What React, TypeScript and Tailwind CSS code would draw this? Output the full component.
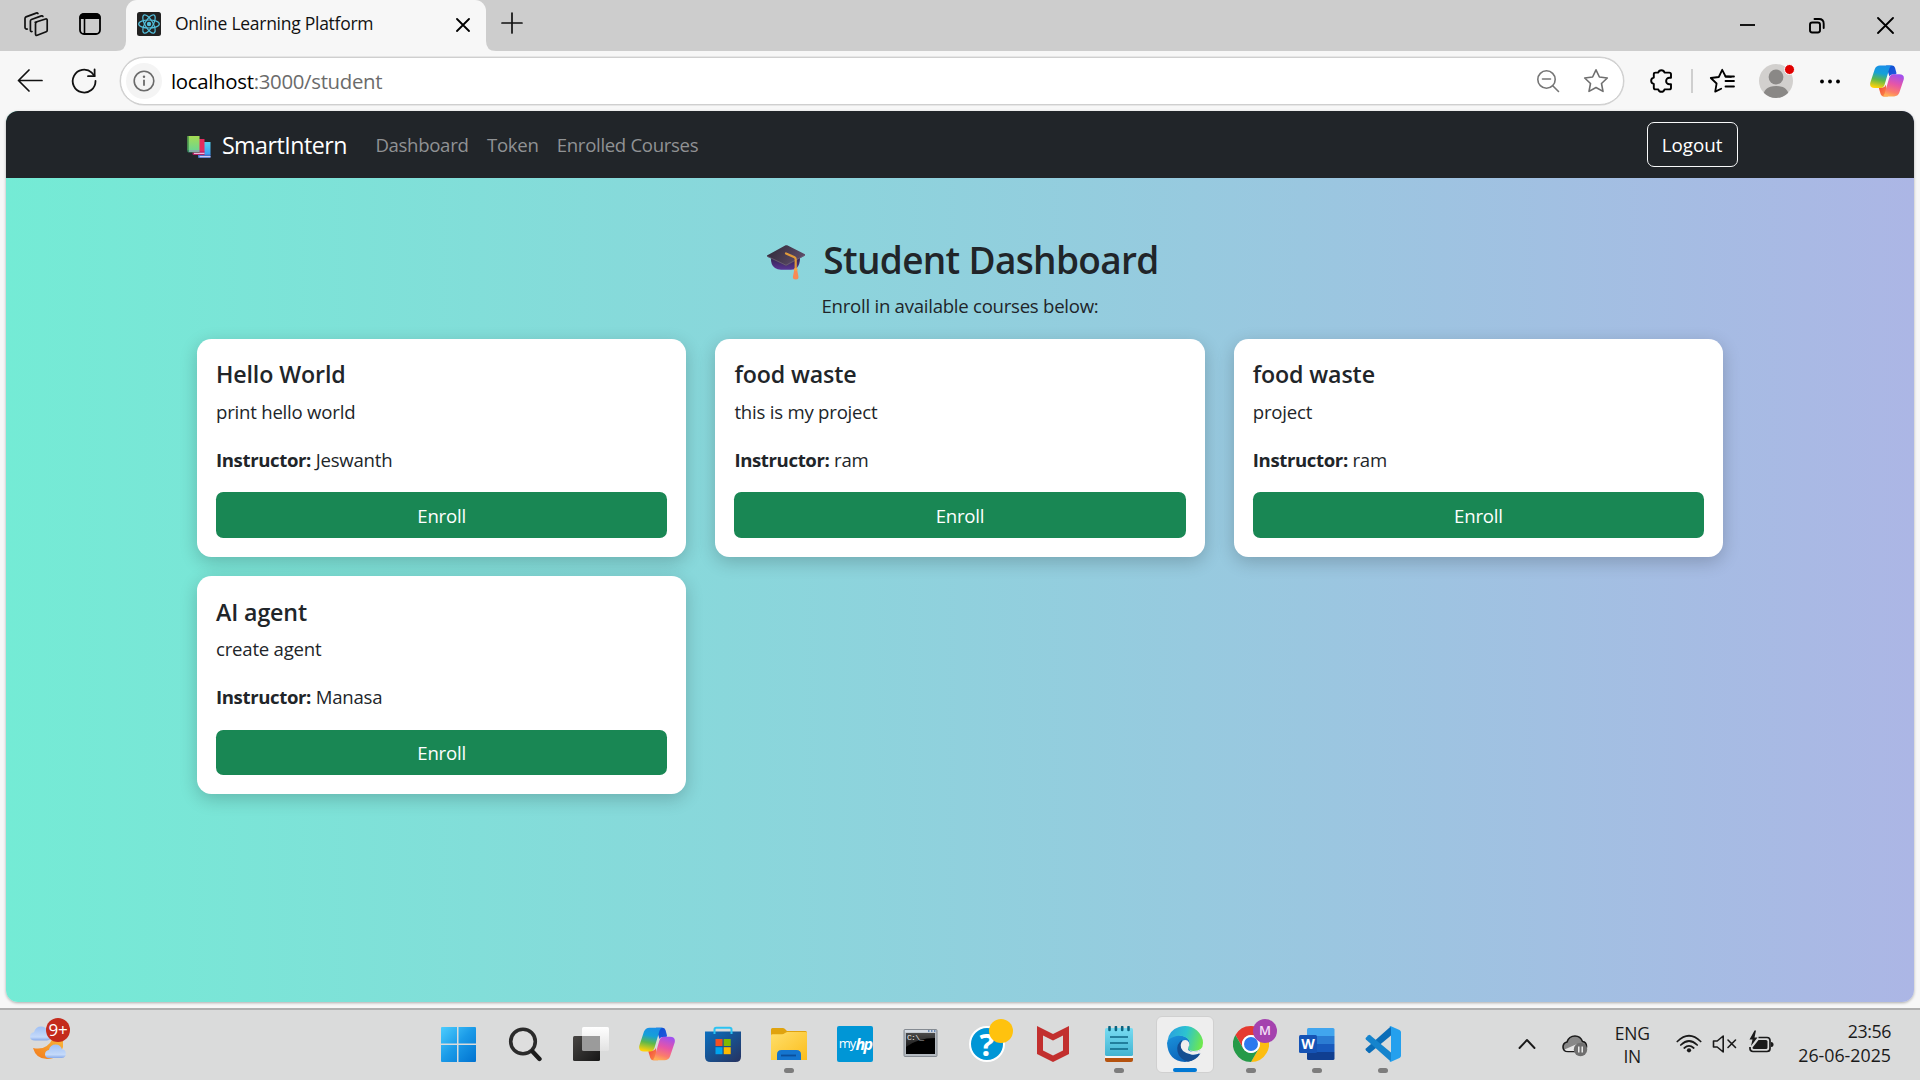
import type { ReactNode } from "react";

const courses = [
  { title: "Hello World", description: "print hello world", instructor: "Jeswanth" },
  { title: "food waste", description: "this is my project", instructor: "ram" },
  { title: "food waste", description: "project", instructor: "ram" },
  { title: "AI agent", description: "create agent", instructor: "Manasa" },
];

/* ---------- browser chrome icons ---------- */

function WorkspacesIcon() {
  return (
    <svg width="26" height="26" viewBox="0 0 26 26" fill="none" stroke="#111" strokeWidth="1.7" strokeLinejoin="round" strokeLinecap="round">
      <path d="M12.2 11.3 22.6 8q1.6-.4 1.6 1.2v10q0 1.100-1 1.500l-9 3.600q-1.700.5-1.700-1.200V13q0-1.200 1-1.700Z" />
      <path d="M9 20.500q-1.600.3-1.600-1.300V10q0-1.100 1-1.500l10-3.600q1.200-.3 1.500.6" />
      <path d="M4.300 18q-2.300.3-2.300-1.800V7.500Q2 6.300 3 5.900l10.200-3.800q1.200-.4 1.700.4" />
    </svg>
  );
}

function TabActionsIcon() {
  return (
    <svg width="24" height="24" viewBox="0 0 24 24">
      <rect x="2" y="2" width="20" height="20" rx="4" fill="none" stroke="#000" strokeWidth="1.8" />
      <path d="M1.500 7V5q0-3.500 3.500-3.500h14q3.500 0 3.500 3.500v2z" />
      <path d="M6.500 7v15" stroke="#000" strokeWidth="1.600" />
    </svg>
  );
}

function ReactFavicon() {
  return (
    <svg width="24" height="24" viewBox="0 0 24 24">
      <rect width="24" height="24" rx="2.500" fill="#222" />
      <g fill="none" stroke="#53c1de" strokeWidth="1.200">
        <ellipse cx="12" cy="12" rx="10.300" ry="4" />
        <ellipse cx="12" cy="12" rx="10.300" ry="4" transform="rotate(60 12 12)" />
        <ellipse cx="12" cy="12" rx="10.300" ry="4" transform="rotate(120 12 12)" />
      </g>
      <circle cx="12" cy="12" r="2.200" fill="#53c1de" />
    </svg>
  );
}

function CrossIcon({ size, weight }: { size: number; weight: number }) {
  return (
    <svg width={size} height={size} viewBox={`0 0 ${size} ${size}`} stroke="#000" strokeWidth={weight} strokeLinecap="round">
      <path d={`M1 1 ${size - 1} ${size - 1}M${size - 1} 1 1 ${size - 1}`} />
    </svg>
  );
}

function CopilotIcon({ size }: { size: number }) {
  return (
    <svg width={size} height={size} viewBox="0 0 36 36">
      <defs>
        <linearGradient id="cpLeft" x1="0.6" y1="0" x2="0.4" y2="1">
          <stop offset="0" stopColor="#1a8fe8" />
          <stop offset=".35" stopColor="#15a0d8" />
          <stop offset=".65" stopColor="#5fb84a" />
          <stop offset="1" stopColor="#ffd20a" />
        </linearGradient>
        <linearGradient id="cpRight" x1="0.700" y1="0" x2="0.400" y2="1">
          <stop offset="0" stopColor="#a050f0" />
          <stop offset=".45" stopColor="#e655a8" />
          <stop offset=".8" stopColor="#fb7d6b" />
          <stop offset="1" stopColor="#ffae55" />
        </linearGradient>
        <linearGradient id="cpTop" x1="0" y1="0" x2="1" y2="1">
          <stop offset="0" stopColor="#0a4fd0" />
          <stop offset="1" stopColor="#2358e0" />
        </linearGradient>
        <linearGradient id="cpBottom" x1="0" y1="0" x2="1" y2="1">
          <stop offset="0" stopColor="#f0453c" />
          <stop offset="1" stopColor="#ff9348" />
        </linearGradient>
      </defs>
      <path d="M17 1.700h6.500q2.200 0 3 2.200L28 9.500q.3 1.500-1.500 1.500h-3q-2 0-3 2z" fill="url(#cpTop)" />
      <path d="M19 34.300h-4.500q-2.500 0-3.200-2.200L9.500 26q-.3-1.200 1-1.200h3.200q2 0 3-2.800z" fill="url(#cpBottom)" />
      <path d="M10.500 1.700h13q-2 0-3 3l-5 17q-1 3.700-4.500 3.700H5Q-.8 25.400.3 19.800L5 5.500q1.500-3.800 5.500-3.800Z" fill="url(#cpLeft)" />
      <path d="M25.500 34.300h-13q2.200 0 3-3l4.800-16.500q1.200-4 4.700-4h6q5.800 0 4.700 5.600L31 30.500q-1.500 3.800-5.500 3.800Z" fill="url(#cpRight)" />
    </svg>
  );
}

/* ---------- browser chrome ---------- */

function TabStrip() {
  return (
    <div className="flex h-[51px] bg-[#cdcdcd] pl-[23px]">
      <div className="flex items-start pt-[11px]">
        <WorkspacesIcon />
      </div>
      <div className="ml-[29px] flex items-start pt-[12px]">
        <TabActionsIcon />
      </div>
      <div className="flex w-[24px] items-end justify-end">
        <svg width="10" height="10" viewBox="0 0 10 10">
          <path d="M10 0v10H0Q10 10 10 0Z" fill="#f7f7f7" />
        </svg>
      </div>
      <div className="flex w-[360px] items-start rounded-t-[11px] bg-[#f7f7f7] pl-[11px] pt-[12px]">
        <ReactFavicon />
        <span className="ml-[14px] w-[281px] whitespace-nowrap text-[17.5px] leading-[23px] tracking-[-0.270px] text-[#111]">
          Online Learning Platform
        </span>
        <div className="pt-[6px]">
          <CrossIcon size={14} weight={1.8} />
        </div>
      </div>
      <div className="flex w-[10px] items-end">
        <svg width="10" height="10" viewBox="0 0 10 10">
          <path d="M0 0v10h10Q0 10 0 0Z" fill="#f7f7f7" />
        </svg>
      </div>
      <div className="ml-[5px] pt-[12px]">
        <svg width="22" height="22" viewBox="0 0 22 22" stroke="#111" strokeWidth="1.700" strokeLinecap="round">
          <path d="M11 1v20M1 11h20" />
        </svg>
      </div>
      <div className="ml-auto flex items-start gap-[52px] pr-[26px] pt-[17px]">
        <svg width="17" height="17" viewBox="0 0 17 17" stroke="#000" strokeWidth="1.800">
          <path d="M1 8h15" />
        </svg>
        <svg width="17" height="17" viewBox="0 0 17 17" fill="none" stroke="#000" strokeWidth="1.900" strokeLinecap="round">
          <rect x="2" y="5.500" width="10" height="10" rx="2.200" />
          <path d="M6.500 2H11q4.700 0 4.700 4.700V11" />
        </svg>
        <CrossIcon size={17} weight={1.8} />
      </div>
    </div>
  );
}

function Toolbar() {
  return (
    <div className="flex h-[60px] items-center bg-[#f7f7f7] pl-[17px]">
      <svg width="26" height="24" viewBox="0 0 26 24" fill="none" stroke="#111" strokeWidth="1.700" strokeLinecap="round" strokeLinejoin="round">
        <path d="M25 11.500H1.500M12 1 1.500 11.500 12 22" />
      </svg>
      <svg className="ml-[28px]" width="26" height="26" viewBox="0 0 26 26" fill="none" stroke="#111" strokeWidth="1.800" strokeLinecap="round" strokeLinejoin="round">
        <path d="M24.500 12.800A11.400 11.400 0 1 1 20.800 4.700L23.500 8" />
        <path d="M23.600 1.500V8.200H17" />
      </svg>
      <div className="ml-[23px] flex h-[48px] w-[1504px] items-center rounded-full border border-[#cfcfcf] bg-white pl-[5px] shadow-[0_0_0_0.5px_#d6d6d6]">
        <div className="flex size-[36px] items-center justify-center rounded-full bg-[#f4f4f4]">
          <svg width="22" height="22" viewBox="0 0 22 22" fill="none" stroke="#6a6a6a" strokeWidth="1.600">
            <circle cx="11" cy="11" r="9.800" />
            <path d="M11 9.800v6" strokeWidth="1.800" />
            <circle cx="11" cy="6.800" r="1.200" fill="#6a6a6a" stroke="none" />
          </svg>
        </div>
        <span className="ml-[9px] text-[20.400px] tracking-[-0.310px] text-[#6b6b6b]">
          <span className="text-black">localhost</span>:3000/student
        </span>
        <svg className="ml-auto" width="24" height="24" viewBox="0 0 24 24" fill="none" stroke="#767676" strokeWidth="1.600" strokeLinecap="round">
          <circle cx="10.500" cy="10.500" r="8.700" />
          <path d="m17 17 5.500 5.500M6.500 10h8" />
        </svg>
        <svg className="ml-[23px] mr-[14px]" width="26" height="26" viewBox="0 0 26 26" fill="none" stroke="#6f6f6f" strokeWidth="1.600" strokeLinejoin="round">
          <path d="m13 1.800 3.400 7.200 7.900 1-5.800 5.500 1.500 7.900-7-3.900-7 3.900 1.500-7.900L1.700 10l7.900-1z" />
        </svg>
      </div>
      <svg className="ml-[25px]" width="26" height="26" viewBox="0 0 26 26" fill="none" stroke="#000" strokeWidth="1.900" strokeLinejoin="round">
        <path d="M9.300 4.600a3.200 3.200 0 0 1 6.200 0h4.800q1.700 0 1.700 1.700v3.400h-1.600a3.300 3.300 0 0 0 0 6.600H22v3.400q0 1.700-1.700 1.700h-4.800a3.200 3.200 0 0 1-6.200 0H6.500q-1.700 0-1.700-1.700v-3.800a3.200 3.200 0 0 1 0-6.300V6.300q0-1.700 1.700-1.700z" />
      </svg>
      <div className="ml-[16px] h-[24px] w-[2px] bg-[#cfcfcf]" />
      <svg className="ml-[16px]" width="26" height="26" viewBox="0 0 26 26" fill="none" stroke="#000" strokeWidth="1.800" strokeLinejoin="round" strokeLinecap="round">
        <path d="M22 8.800 16.600 8.500 13.200 1.800 9.800 9l-8 1 5.800 5.500L6.200 23.600l6-2.900" />
        <path d="M16.500 13H25M16.500 8.500H25M16.500 18.500H25" />
      </svg>
      <div className="relative ml-[24px] size-[34px] shrink-0">
        <svg width="34" height="34" viewBox="0 0 34 34">
          <clipPath id="avatarClip">
            <circle cx="17" cy="17" r="17" />
          </clipPath>
          <g clipPath="url(#avatarClip)">
            <rect width="34" height="34" fill="#d2d0ce" />
            <circle cx="17" cy="13" r="7.400" fill="#8a8886" />
            <path d="M4 34q0-12 13-12t13 12z" fill="#8a8886" />
          </g>
        </svg>
        <span className="absolute top-0 right-[-2px] size-[11px] rounded-full border border-white bg-[#e00000]" />
      </div>
      <svg className="ml-[25px]" width="24" height="8" viewBox="0 0 24 8">
        <circle cx="4" cy="4.500" r="1.900" />
        <circle cx="12" cy="4.500" r="1.900" />
        <circle cx="20" cy="4.500" r="1.900" />
      </svg>
      <div className="ml-[28px]">
        <CopilotIcon size={34} />
      </div>
    </div>
  );
}

/* ---------- web page ---------- */

function BooksIcon() {
  return (
    <svg width="24" height="24" viewBox="0 0 24 24">
      <defs>
        <linearGradient id="bkGreen" x1="0" y1="0" x2="0" y2="1">
          <stop offset="0" stopColor="#a5dc52" />
          <stop offset="1" stopColor="#6fd68e" />
        </linearGradient>
        <linearGradient id="bkBlue" x1="0" y1="0" x2="0" y2="1">
          <stop offset="0" stopColor="#52d0ee" />
          <stop offset="1" stopColor="#3a9df5" />
        </linearGradient>
      </defs>
      <path d="M11.500 7h12v13h-12z" fill="url(#bkBlue)" />
      <path d="M11 19.500h12.500V23H12q-1 0-1-1z" fill="#4573c9" />
      <path d="M12.500 21h11v1.300h-11z" fill="#cfc7f2" />
      <path d="M6 4h11.500v13H6z" fill="#e32b5e" />
      <path d="M5.500 16.500h12V20H7q-1.500 0-1.500-1z" fill="#b51f63" />
      <path d="M7 17.800h10.500V19H7z" fill="#eab7df" />
      <path d="M.500 1.500Q.500 1 1 1H12.500v14H.500z" fill="url(#bkGreen)" />
      <path d="M.500 1.500V16h1.200V1z" fill="#3f8f49" />
      <path d="M.500 15h12v2.500H2q-1.500 0-1.500-1.200z" fill="#3b8a63" />
      <path d="M2 15.500h10.500v1.100H2z" fill="#d6cdf0" />
    </svg>
  );
}

function GraduationCap() {
  return (
    <svg width="40" height="38" viewBox="0 0 40 38">
      <defs>
        <linearGradient id="capTop" x1="0" y1="0" x2="1" y2="0.400">
          <stop offset="0" stopColor="#2e2836" />
          <stop offset="1" stopColor="#5b4a66" />
        </linearGradient>
        <linearGradient id="capBase" x1="0" y1="0" x2="0" y2="1">
          <stop offset="0" stopColor="#33254f" />
          <stop offset="1" stopColor="#5a3494" />
        </linearGradient>
      </defs>
      <path d="M5 13q-.5 7 4 10 2.500 1.800 6 1.800h10q4 0 6-2 3-3.500 3-9.800z" fill="url(#capBase)" />
      <path d="M1 11.600v-1L19.600.300q.8-.3 1.600 0L39 9.300v1.200L21 20.500q-.8.400-1.600 0z" fill="url(#capTop)" />
      <path d="M1 11.200 20 20.200 39 10" fill="none" stroke="#6d5f78" strokeWidth=".8" />
      <path d="M20 8.500 28.500 12.200q1.200.6 1.200 2V25" fill="none" stroke="#e09a3a" strokeWidth="2.200" strokeLinecap="round" />
      <path d="M28.400 24h2.600l1.500 8q0 2.500-2.800 2.500t-2.800-2.500z" fill="#fa8a55" />
      <circle cx="29.700" cy="24.500" r="1.800" fill="#f6a04a" />
    </svg>
  );
}

function Navbar() {
  return (
    <nav className="flex h-[67px] items-center bg-[#212529] px-[176.400px]">
      <div className="ml-[5px] mt-[4px]">
        <BooksIcon />
      </div>
      <span className="ml-[10.500px] w-[143.500px] whitespace-nowrap pt-[1px] text-[23.200px] tracking-[-0.500px] text-white">SmartIntern</span>
      <div className="flex gap-[19.200px] whitespace-nowrap pl-[10px] pt-px text-[18.600px] tracking-[-0.320px] text-[#909294]">
        <span className="w-[92.500px]">Dashboard</span>
        <span className="w-[50.500px]">Token</span>
        <span>Enrolled Courses</span>
      </div>
      <button className="ml-auto flex h-[45px] w-[91px] items-center justify-center rounded-[7px] border border-[#f8f9fa] pt-[2px] text-[18.800px] text-white">
        Logout
      </button>
    </nav>
  );
}

function CourseCard({ title, description, instructor }: { title: string; description: string; instructor: string }) {
  return (
    <div className="rounded-[14.400px] bg-white p-[19.200px] text-[18.600px] leading-[28.800px] tracking-[-0.220px] shadow-[0_5px_18px_rgba(0,0,0,0.2)]">
      <h5 className="mb-[8.600px] pt-[3px] text-[23.200px] font-semibold leading-[27.800px] tracking-[-0.120px]">{title}</h5>
      <p className="mb-[19.200px]">{description}</p>
      <p className="mb-[18px]">
        <strong className="font-bold tracking-[-0.380px]">Instructor:</strong> {instructor}
      </p>
      <button className="flex h-[45.600px] w-full items-center justify-center rounded-[7.200px] bg-[#198754] pt-[2px] text-white">Enroll</button>
    </div>
  );
}

function WebPage() {
  return (
    <div className="mx-[6px] h-[891px] overflow-hidden rounded-[12px] bg-[linear-gradient(to_right,#74ebd5,#acb6e5)] text-[#212529] shadow-[0_1px_3px_rgba(0,0,0,0.3)]">
      <Navbar />
      <main className="px-[190.800px] pt-[59px]">
        <h2 className="flex h-[46px] items-center justify-center pl-[5px] text-[37px] font-semibold leading-[46px] tracking-[-0.670px]">
          <span className="mr-[17px] pt-[8px]">
            <GraduationCap />
          </span>
          <span>Student Dashboard</span>
        </h2>
        <p className="mt-[9px] text-center text-[18.600px] leading-[28.800px] tracking-[-0.260px]">Enroll in available courses below:</p>
        <div className="mt-[18.200px] grid grid-cols-3 gap-x-[28.800px] gap-y-[19.200px]">
          {courses.map((c, i) => (
            <CourseCard key={i} {...c} />
          ))}
        </div>
      </main>
    </div>
  );
}

/* ---------- taskbar ---------- */

const CLOUD = "M5 14.500Q0 14.500 0 10.500 0 7 4 6.200 5.500.5 11 .5q5 0 6.500 5 4 .500 4 4.500t-4.500 4.500z";

function WeatherWidget() {
  return (
    <div className="relative ml-[28px] mt-[14px] h-[44px] w-[44px]">
      <svg width="44" height="44" viewBox="0 0 44 44">
        <defs>
          <linearGradient id="moon" x1="0" y1="1" x2="1" y2="0">
            <stop offset="0" stopColor="#f2791d" />
            <stop offset="1" stopColor="#f9b83a" />
          </linearGradient>
          <linearGradient id="cloud" x1="0" y1="0" x2="0" y2="1">
            <stop offset="0" stopColor="#9fc0f5" />
            <stop offset=".75" stopColor="#c5dafa" />
            <stop offset="1" stopColor="#86a9ea" />
          </linearGradient>
        </defs>
        <path d="M5 24q14 3 20-10l10 2v7q-4 12-16 12Q8 35 5 24Z" fill="url(#moon)" />
        <path d={CLOUD} transform="translate(2 2)" fill="url(#cloud)" />
        <path d={CLOUD} transform="translate(17 20) scale(.97)" fill="url(#cloud)" />
      </svg>
      <span className="absolute left-[18px] top-[-6px] flex size-[24px] items-center justify-center rounded-full bg-[#c42b1c] text-[17px] tracking-[-0.200px] text-white">
        9+
      </span>
    </div>
  );
}

const StartIcon = () => (
  <svg className="mr-[3px]" width="36" height="36" viewBox="0 0 36 36">
    <defs>
      <linearGradient id="win" gradientUnits="userSpaceOnUse" x1="0" y1="0" x2="36" y2="36">
        <stop offset="0" stopColor="#4fd0ff" />
        <stop offset=".5" stopColor="#1b9be8" />
        <stop offset="1" stopColor="#0072d0" />
      </linearGradient>
    </defs>
    <path d="M2 1h15v16.500H1V2q0-1 1-1ZM18.500 1H35q1 0 1 1v15.500H18.500zM1 19h16v17H2q-1 0-1-1zM18.500 19H36v16q0 1-1 1H18.500z" fill="url(#win)" />
  </svg>
);

const SearchIcon = () => (
  <svg width="36" height="36" viewBox="0 0 36 36">
    <circle cx="16" cy="15.500" r="12.300" fill="#dedede" stroke="#2b2b2b" strokeWidth="3.600" />
    <path d="m25.500 25.500 7 7.500" stroke="#1c1c1c" strokeWidth="4.400" strokeLinecap="round" />
  </svg>
);

const TaskViewIcon = () => (
  <svg width="36" height="36" viewBox="0 0 36 36">
    <defs>
      <linearGradient id="tvBack" x1="0" y1="0" x2="1" y2="1">
        <stop offset="0" stopColor="#484644" />
        <stop offset="1" stopColor="#161616" />
      </linearGradient>
      <linearGradient id="tvFront" x1="0" y1="0" x2="0" y2="1">
        <stop offset="0" stopColor="#fff" />
        <stop offset="1" stopColor="#e2e2e2" />
      </linearGradient>
    </defs>
    <rect x="9" y="1" width="27" height="24" rx="1.500" fill="url(#tvFront)" />
    <rect x="0" y="10" width="27" height="25" rx="1.500" fill="url(#tvBack)" />
    <path d="M9 10h18v15H10.500Q9 25 9 23.500z" fill="#9b9b9b" />
  </svg>
);

const StoreIcon = () => (
  <svg width="36" height="36" viewBox="0 0 36 36">
    <defs>
      <linearGradient id="store" x1="0" y1="0" x2="1" y2="1">
        <stop offset="0" stopColor="#0a6fbf" />
        <stop offset="1" stopColor="#27325f" />
      </linearGradient>
    </defs>
    <path d="M0 5.500h36v25Q36 36 30.500 36h-25Q0 36 0 30.500z" fill="url(#store)" />
    <path d="M9.500 8V3.500q0-1.700 1.700-1.700h13.600q1.700 0 1.700 1.700V8" fill="none" stroke="#2cc3f2" strokeWidth="2" />
    <path d="M10.500 13h7v7h-7z" fill="#f25022" />
    <path d="M18.700 13h7v7h-7z" fill="#7fba00" />
    <path d="M10.500 21.200h7v7h-7z" fill="#00a4ef" />
    <path d="M18.700 21.200h7v7h-7z" fill="#ffb900" />
  </svg>
);

const ExplorerIcon = () => (
  <svg width="36" height="36" viewBox="0 0 36 36">
    <defs>
      <linearGradient id="folder" x1="0" y1="0" x2="1" y2="1">
        <stop offset="0" stopColor="#ffdf6b" />
        <stop offset="1" stopColor="#fbbd1c" />
      </linearGradient>
    </defs>
    <path d="M0 3.500Q0 2 1.500 2H12q1.500 0 2.500 1.500L16 5h18.500q1.500 0 1.500 1.500V12H0z" fill="#e0a30e" />
    <path d="M0 9.500q0-1.300 1.500-1.300H11q1.500 0 3-1.200L16 6h19q1 0 1 1v27H0z" fill="url(#folder)" />
    <path d="M6 34v-5.500Q6 24 10.500 24h15q4.500 0 4.500 4.500V34z" fill="#1475cf" />
    <path d="M10 29.500h15" stroke="#0a4f9c" strokeWidth="1.800" />
  </svg>
);

const MyHpIcon = () => (
  <div className="flex size-[36px] items-center justify-center rounded-[2px] bg-[#0096d6] text-white">
    <span className="text-[13px] tracking-[-0.800px]">my</span>
    <span className="-mt-px text-[16px] font-bold italic tracking-[-1.700px]">hp</span>
  </div>
);

const TerminalIcon = () => (
  <svg width="36" height="36" viewBox="0 0 36 36">
    <defs>
      <linearGradient id="term" x1="0" y1="0" x2="0" y2="1">
        <stop offset="0" stopColor="#4a4a4a" />
        <stop offset="1" stopColor="#1c1c1c" />
      </linearGradient>
    </defs>
    <rect x="1" y="3.500" width="33" height="27" rx="1" fill="#b4bac0" stroke="#858b92" />
    <path d="M2 4h31v2.500H2z" fill="#d5dbe3" />
    <path d="M25 5h1.500M28 5h1.500M31 5h1.500" stroke="#4b73a8" strokeWidth="1.300" />
    <rect x="3" y="7" width="29" height="21" fill="#000" />
    <path d="M3 7h29v5Q15 12 3 21z" fill="url(#term)" />
    <text x="4" y="14" fontSize="8" fill="#eee" fontFamily="Liberation Mono, monospace" textLength="17">C:\_</text>
  </svg>
);

const HelpIcon = () => (
  <div className="relative size-[36px]">
    <div className="flex size-[36px] items-center justify-center rounded-full border-[2px] border-white bg-[#0096d6] text-[31px] font-bold leading-none text-white">?</div>
    <span className="absolute left-[20px] top-[-7px] size-[24px] rounded-full bg-[#ffc20e]" />
  </div>
);

const McAfeeIcon = () => (
  <svg width="36" height="36" viewBox="0 0 36 36">
    <path d="M2 0 18 8 34 0v28L18 36 2 28z" fill="#c22f2e" />
    <path d="m8 9.500 10 5 10-5v15l-10 5-10-5z" fill="#dadada" />
  </svg>
);

const NotepadIcon = () => (
  <svg width="36" height="36" viewBox="0 0 36 36">
    <defs>
      <linearGradient id="note" x1="0" y1="0" x2="0" y2="1">
        <stop offset="0" stopColor="#78dcf2" />
        <stop offset="1" stopColor="#42b4d2" />
      </linearGradient>
    </defs>
    <path d="M4 31h28v3q0 2-2 2H6q-2 0-2-2z" fill="#b5530f" />
    <path d="M4 28h28v4H4z" fill="#f4f4f4" />
    <rect x="4" y="2" width="28" height="28" rx="1.500" fill="url(#note)" />
    <path d="M8.500 1v3M14.900 1v3M21.200 1v3M27.500 1v3" stroke="#0d6480" strokeWidth="2.600" strokeLinecap="round" />
    <path d="M9 11h18M9 17h18M9 23h18" stroke="#0f6786" strokeWidth="1.700" />
  </svg>
);

const EdgeIcon = () => (
  <svg width="36" height="36" viewBox="0 0 36 36">
    <defs>
      <linearGradient id="edTop" x1="0" y1=".3" x2="1" y2=".5">
        <stop offset="0" stopColor="#2a9fe0" />
        <stop offset=".5" stopColor="#2cc3d0" />
        <stop offset="1" stopColor="#6ee84e" />
      </linearGradient>
      <linearGradient id="edMid" x1="0" y1="0" x2=".5" y2="1">
        <stop offset="0" stopColor="#1b93dc" />
        <stop offset="1" stopColor="#0b62b8" />
      </linearGradient>
    </defs>
    <path d="M0 17Q2 8 12 9q14 2 10 12-1 4 4 5 4 0 8-2-5 12-16 12Q1 35 0 17Z" fill="url(#edMid)" />
    <path d="M.5 15Q2 4 12 1q10-3 18 3.500 6 5.500 6 12.500 0 8-9.500 8-6.500 0-5-4 2-3 .5-6.500Q18 9 9.500 10 3 11.500 .5 15Z" fill="url(#edTop)" />
    <path d="M15 14q-6 4-4.500 11.500Q12 33 21 35.700q8-1.200 12.500-8.200-2 .5-4.500 1-9 1-12.500-5.500-2.500-5-1.500-9Z" fill="#134d92" />
    <path d="M16 14.500q4-1.500 6 2 1 3-.8 5.500Q20 25.500 26.500 25.700q4 0 7-1.700 2.500-.8 1.500 1.500-5 4-10 3.200Q13 26.500 13.700 19q.3-3 2.300-4.500Z" fill="#eeeeee" />
  </svg>
);

const ChromeIcon = () => (
  <div className="relative size-[36px]">
    <svg width="36" height="36" viewBox="0 0 36 36">
      <path d="M2.410 9A18 18 0 0 1 33.590 9H18a9 9 0 0 0-7.790 13.500z" fill="#e53a30" />
      <path d="M33.590 9A18 18 0 0 1 18 36l7.790-13.500A9 9 0 0 0 18 9z" fill="#fcbd10" />
      <path d="M18 36A18 18 0 0 1 2.410 9l7.800 13.500A9 9 0 0 0 25.790 22.500z" fill="#259a48" />
      <circle cx="18" cy="18" r="9" fill="#fff" />
      <circle cx="18" cy="18" r="7" fill="#2b79ee" />
    </svg>
    <span className="absolute left-[20px] top-[-7px] flex size-[24px] items-center justify-center rounded-full bg-[#a442ae] text-[13px] font-semibold text-[#f3dff6]">M</span>
  </div>
);

const WordIcon = () => (
  <div className="relative size-[36px]">
    <svg width="36" height="36" viewBox="0 0 36 36">
      <path d="M8 3.500Q8 2 9.500 2H34q1.500 0 1.500 1.500V10H8z" fill="#41a5ee" />
      <path d="M8 10h27.500v8H8z" fill="#2b7cd3" />
      <path d="M8 18h27.500v8H8z" fill="#185abd" />
      <path d="M8 26h27.500v6.500q0 1.500-1.500 1.500H9.500Q8 34 8 32.500z" fill="#103f91" />
      <rect x="0" y="9" width="18" height="18" rx="1.500" fill="#1553b5" />
    </svg>
    <span className="absolute left-0 top-[9px] flex h-[18px] w-[18px] items-center justify-center text-[14px] font-bold leading-none text-white">W</span>
  </div>
);

const VsCodeIcon = () => (
  <svg width="36" height="36" viewBox="0 0 36 36">
    <path d="M26 .3v9.200L5.200 26.800q-.9.700-1.800 0L.9 24.300q-.9-1 0-1.900z" fill="#0a6db8" />
    <path d="M26 35.700v-9.200L5.200 9.200q-.9-.7-1.800 0L.9 11.700q-.9 1 0 1.900z" fill="#1584cd" />
    <path d="M26 .3 34.500 4Q36 4.700 36 6.200v23.600q0 1.500-1.500 2.200L26 35.700q-1 .2-2-.6 2 .5 2-1.700V2.600q0-2.200-2-1.700 1-.9 2-.6Z" fill="#24a0ee" />
  </svg>
);

type App = { icon: ReactNode; state?: "open" | "active" };

const apps: App[] = [
  { icon: <StartIcon /> },
  { icon: <SearchIcon /> },
  { icon: <TaskViewIcon /> },
  { icon: <CopilotIcon size={36} /> },
  { icon: <StoreIcon /> },
  { icon: <ExplorerIcon />, state: "open" },
  { icon: <MyHpIcon /> },
  { icon: <TerminalIcon /> },
  { icon: <HelpIcon /> },
  { icon: <McAfeeIcon /> },
  { icon: <NotepadIcon />, state: "open" },
  { icon: <EdgeIcon />, state: "active" },
  { icon: <ChromeIcon />, state: "open" },
  { icon: <WordIcon />, state: "open" },
  { icon: <VsCodeIcon />, state: "open" },
];

function AppButton({ icon, state }: App) {
  return (
    <div className="flex h-[58px] w-[66px] justify-center">
      <div
        className={
          state === "active"
            ? "flex h-[57px] w-[58px] flex-col items-center rounded-[6px] border border-[#d0d0d0] bg-[#eeeeee] pt-[9px]"
            : "flex w-[58px] flex-col items-center pt-[10px]"
        }
      >
        {icon}
        {state === "active" && <span className="mt-[6px] h-[5px] w-[24px] rounded-full bg-[#0078d4]" />}
        {state === "open" && <span className="mt-[6px] h-[5px] w-[10px] rounded-full bg-[#7d7d7d]" />}
      </div>
    </div>
  );
}

function SystemTray() {
  return (
    <div className="ml-auto flex items-start pr-[29px] text-[#1a1a1a]">
      <svg className="mt-[28px]" width="18" height="12" viewBox="0 0 18 12" fill="none" stroke="#1a1a1a" strokeWidth="1.900" strokeLinecap="round" strokeLinejoin="round">
        <path d="m1.500 10 7.500-8 7.500 8" />
      </svg>
      <svg className="ml-[26px] mt-[25px]" width="26" height="22" viewBox="0 0 26 22">
        <path d="M6 16.500Q1 16.500 1 12 1 8 5 7q2-6 8-6 5.500 0 7.500 5.500 4 .5 4 5.000 0 5-5 5z" fill="#888" stroke="#1a1a1a" strokeWidth="1.600" />
        <path d="M2.500 14.500 15 9l4 7H6q-2.500 0-3.500-1.500Z" fill="#e6e6e6" />
        <circle cx="18.500" cy="14.500" r="6.700" fill="#6f6f6f" />
        <path d="M16.800 11.500v6M20.200 11.500v6" stroke="#fff" strokeWidth="1.300" />
      </svg>
      <div className="ml-[22px] mt-[12px] w-[44px] text-center text-[17.500px] leading-[23px] tracking-[-0.200px]">
        <div>ENG</div>
        <div>IN</div>
      </div>
      <svg className="ml-[22px] mt-[24px]" width="26" height="20" viewBox="0 0 26 20" fill="none" stroke="#1a1a1a" strokeWidth="1.700" strokeLinecap="round">
        <path d="M1.300 7.500q11.700-11.500 23.400 0M4.800 11q8.200-8 16.400 0M8.300 14q4.700-4.300 9.400 0" />
        <circle cx="13" cy="16.300" r="2.100" fill="#1a1a1a" stroke="none" />
      </svg>
      <svg className="ml-[10px] mt-[24px]" width="26" height="20" viewBox="0 0 26 20" fill="none" stroke="#1a1a1a" strokeWidth="1.600" strokeLinecap="round" strokeLinejoin="round">
        <path d="M1.500 7h3.700l6-5v16l-6-5H1.500zM16 6l7.500 7.500M23.500 6 16 13.500" />
      </svg>
      <svg className="ml-[10px] mt-[20px]" width="26" height="24" viewBox="0 0 26 24">
        <path d="M10.500 7.500H19q3 0 3 3v8q0 3-3 3H5q-3 0-3-3V17" fill="none" stroke="#1a1a1a" strokeWidth="1.700" />
        <path d="M10.500 10H18q1.500 0 1.500 1.500v6Q19.500 19 18 19H6q-1.500 0-1.500-1.500z" fill="#1a1a1a" />
        <path d="M23 12q2.500 0 2.500 2.500T23 17z" fill="#1a1a1a" />
        <path d="M6.500.5 1.500 9.500h3l-1.500 6.500 6.500-8.500H6.500L8 .5z" fill="#1a1a1a" />
      </svg>
      <div className="ml-[24px] mt-[9px] text-right text-[17.800px] leading-[24px]">
        <div className="tracking-[-0.400px]">23:56</div>
        <div>26-06-2025</div>
      </div>
    </div>
  );
}

function Taskbar() {
  return (
    <div className="mt-[6px] flex h-[72px] border-t-[2px] border-[#b0b0b0] bg-[#dadbdb]">
      <div className="w-[426px] shrink-0">
        <WeatherWidget />
      </div>
      <div className="flex pt-[6px]">
        {apps.map((a, i) => (
          <AppButton key={i} {...a} />
        ))}
      </div>
      <SystemTray />
    </div>
  );
}

export default function App() {
  return (
    <div className="flex h-[1080px] w-[1920px] flex-col overflow-hidden bg-[#f7f7f7] font-['Open_Sans','Noto_Sans',sans-serif] [&_svg]:shrink-0">
      <TabStrip />
      <Toolbar />
      <WebPage />
      <Taskbar />
    </div>
  );
}
